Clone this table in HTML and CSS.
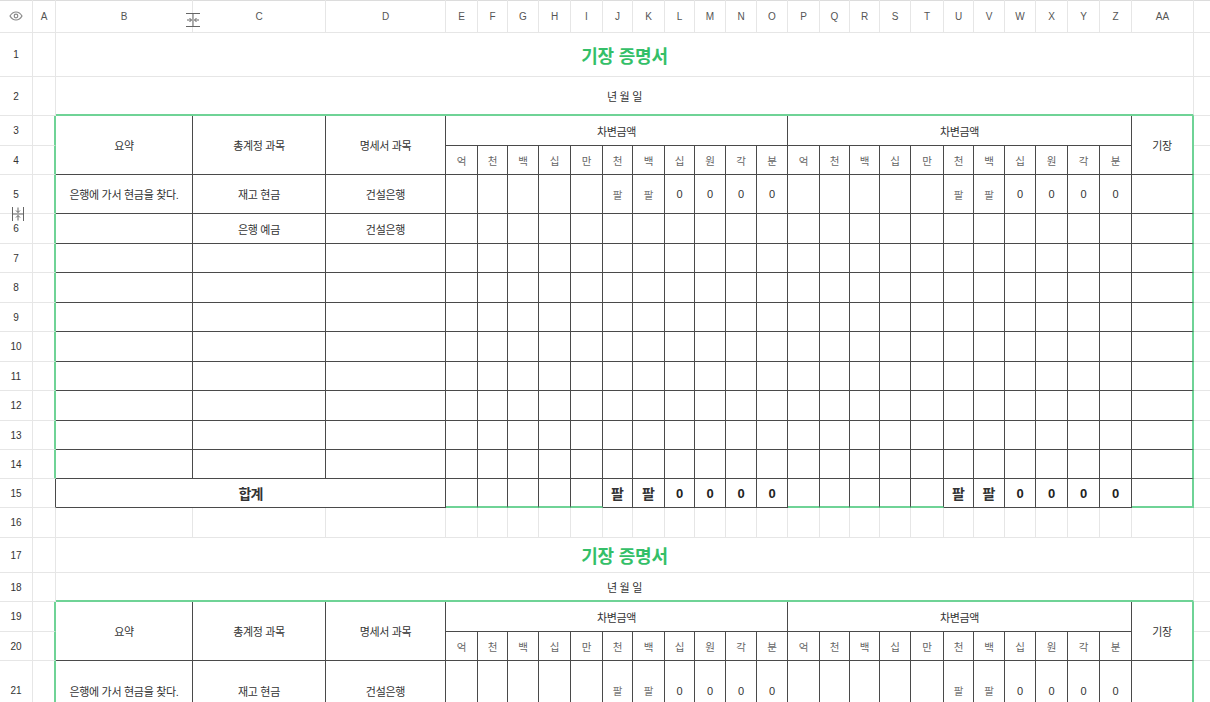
FILE: index.html
```html
<!DOCTYPE html>
<html lang="ko">
<head>
<meta charset="utf-8">
<title>기장 증명서</title>
<link rel="stylesheet" href="styles.css">
</head>
<body>
<div class="wrap">
<div class="sheet">
<!-- header -->
<div class="hd"><svg width="14" height="10" viewBox="0 0 14 10"><path d="M1 5C3 1.6 5 1 7 1S11 1.6 13 5C11 8.4 9 9 7 9S3 8.4 1 5Z" fill="none" stroke="#8a8a8a" stroke-width="1.2"/><circle cx="7" cy="5" r="1.8" fill="none" stroke="#8a8a8a" stroke-width="1.2"/></svg></div>
<div class="hd">A</div><div class="hd">B</div><div class="hd">C</div><div class="hd">D</div><div class="hd">E</div><div class="hd">F</div><div class="hd">G</div><div class="hd">H</div><div class="hd">I</div><div class="hd">J</div><div class="hd">K</div><div class="hd">L</div><div class="hd">M</div><div class="hd">N</div><div class="hd">O</div><div class="hd">P</div><div class="hd">Q</div><div class="hd">R</div><div class="hd">S</div><div class="hd">T</div><div class="hd">U</div><div class="hd">V</div><div class="hd">W</div><div class="hd">X</div><div class="hd">Y</div><div class="hd">Z</div><div class="hd">AA</div><div class="hd"></div>
<!-- row 1 -->
<div class="rn">1</div><div></div><div class="s26 title">기장 증명서</div><div></div>
<!-- row 2 -->
<div class="rn">2</div><div></div><div class="s26 date gb">년 월 일</div><div></div>
<!-- row 3 -->
<div class="rn">3</div><div class="gr"></div>
<div class="t th r2">요약</div><div class="t th r2">총계정 과목</div><div class="t th r2">명세서 과목</div>
<div class="t th s11">차변금액</div><div class="t th s11">차변금액</div>
<div class="t th r2 gr">기장</div><div></div>
<!-- row 4 -->
<div class="rn">4</div><div class="gr"></div>
<div class="t sub">억</div><div class="t sub">천</div><div class="t sub">백</div><div class="t sub">십</div><div class="t sub">만</div><div class="t sub">천</div><div class="t sub">백</div><div class="t sub">십</div><div class="t sub">원</div><div class="t sub">각</div><div class="t sub">분</div>
<div class="t sub">억</div><div class="t sub">천</div><div class="t sub">백</div><div class="t sub">십</div><div class="t sub">만</div><div class="t sub">천</div><div class="t sub">백</div><div class="t sub">십</div><div class="t sub">원</div><div class="t sub">각</div><div class="t sub">분</div>
<div></div>
<!-- row 5 -->
<div class="rn">5</div><div class="gr"></div>
<div class="t tx">은행에 가서 현금을 찾다.</div><div class="t tx">재고 현금</div><div class="t tx">건설은행</div>
<div class="t"></div><div class="t"></div><div class="t"></div><div class="t"></div><div class="t"></div>
<div class="t p">팔</div><div class="t p">팔</div><div class="t z">0</div><div class="t z">0</div><div class="t z">0</div><div class="t z">0</div>
<div class="t"></div><div class="t"></div><div class="t"></div><div class="t"></div><div class="t"></div>
<div class="t p">팔</div><div class="t p">팔</div><div class="t z">0</div><div class="t z">0</div><div class="t z">0</div><div class="t z">0</div>
<div class="t gr"></div><div></div>
<!-- row 6 -->
<div class="rn">6</div><div class="gr"></div>
<div class="t"></div><div class="t tx">은행 예금</div><div class="t tx">건설은행</div>
<div class="t"></div><div class="t"></div><div class="t"></div><div class="t"></div><div class="t"></div><div class="t"></div><div class="t"></div><div class="t"></div><div class="t"></div><div class="t"></div><div class="t"></div>
<div class="t"></div><div class="t"></div><div class="t"></div><div class="t"></div><div class="t"></div><div class="t"></div><div class="t"></div><div class="t"></div><div class="t"></div><div class="t"></div><div class="t"></div>
<div class="t gr"></div><div></div>
<!-- row 7 -->
<div class="rn">7</div><div class="gr"></div>
<div class="t"></div><div class="t"></div><div class="t"></div>
<div class="t"></div><div class="t"></div><div class="t"></div><div class="t"></div><div class="t"></div><div class="t"></div><div class="t"></div><div class="t"></div><div class="t"></div><div class="t"></div><div class="t"></div>
<div class="t"></div><div class="t"></div><div class="t"></div><div class="t"></div><div class="t"></div><div class="t"></div><div class="t"></div><div class="t"></div><div class="t"></div><div class="t"></div><div class="t"></div>
<div class="t gr"></div><div></div>
<!-- row 8 -->
<div class="rn">8</div><div class="gr"></div>
<div class="t"></div><div class="t"></div><div class="t"></div>
<div class="t"></div><div class="t"></div><div class="t"></div><div class="t"></div><div class="t"></div><div class="t"></div><div class="t"></div><div class="t"></div><div class="t"></div><div class="t"></div><div class="t"></div>
<div class="t"></div><div class="t"></div><div class="t"></div><div class="t"></div><div class="t"></div><div class="t"></div><div class="t"></div><div class="t"></div><div class="t"></div><div class="t"></div><div class="t"></div>
<div class="t gr"></div><div></div>
<!-- row 9 -->
<div class="rn">9</div><div class="gr"></div>
<div class="t"></div><div class="t"></div><div class="t"></div>
<div class="t"></div><div class="t"></div><div class="t"></div><div class="t"></div><div class="t"></div><div class="t"></div><div class="t"></div><div class="t"></div><div class="t"></div><div class="t"></div><div class="t"></div>
<div class="t"></div><div class="t"></div><div class="t"></div><div class="t"></div><div class="t"></div><div class="t"></div><div class="t"></div><div class="t"></div><div class="t"></div><div class="t"></div><div class="t"></div>
<div class="t gr"></div><div></div>
<!-- row 10 -->
<div class="rn">10</div><div class="gr"></div>
<div class="t"></div><div class="t"></div><div class="t"></div>
<div class="t"></div><div class="t"></div><div class="t"></div><div class="t"></div><div class="t"></div><div class="t"></div><div class="t"></div><div class="t"></div><div class="t"></div><div class="t"></div><div class="t"></div>
<div class="t"></div><div class="t"></div><div class="t"></div><div class="t"></div><div class="t"></div><div class="t"></div><div class="t"></div><div class="t"></div><div class="t"></div><div class="t"></div><div class="t"></div>
<div class="t gr"></div><div></div>
<!-- row 11 -->
<div class="rn">11</div><div class="gr"></div>
<div class="t"></div><div class="t"></div><div class="t"></div>
<div class="t"></div><div class="t"></div><div class="t"></div><div class="t"></div><div class="t"></div><div class="t"></div><div class="t"></div><div class="t"></div><div class="t"></div><div class="t"></div><div class="t"></div>
<div class="t"></div><div class="t"></div><div class="t"></div><div class="t"></div><div class="t"></div><div class="t"></div><div class="t"></div><div class="t"></div><div class="t"></div><div class="t"></div><div class="t"></div>
<div class="t gr"></div><div></div>
<!-- row 12 -->
<div class="rn">12</div><div class="gr"></div>
<div class="t"></div><div class="t"></div><div class="t"></div>
<div class="t"></div><div class="t"></div><div class="t"></div><div class="t"></div><div class="t"></div><div class="t"></div><div class="t"></div><div class="t"></div><div class="t"></div><div class="t"></div><div class="t"></div>
<div class="t"></div><div class="t"></div><div class="t"></div><div class="t"></div><div class="t"></div><div class="t"></div><div class="t"></div><div class="t"></div><div class="t"></div><div class="t"></div><div class="t"></div>
<div class="t gr"></div><div></div>
<!-- row 13 -->
<div class="rn">13</div><div class="gr"></div>
<div class="t"></div><div class="t"></div><div class="t"></div>
<div class="t"></div><div class="t"></div><div class="t"></div><div class="t"></div><div class="t"></div><div class="t"></div><div class="t"></div><div class="t"></div><div class="t"></div><div class="t"></div><div class="t"></div>
<div class="t"></div><div class="t"></div><div class="t"></div><div class="t"></div><div class="t"></div><div class="t"></div><div class="t"></div><div class="t"></div><div class="t"></div><div class="t"></div><div class="t"></div>
<div class="t gr"></div><div></div>
<!-- row 14 -->
<div class="rn">14</div><div class="gr"></div>
<div class="t"></div><div class="t"></div><div class="t"></div>
<div class="t"></div><div class="t"></div><div class="t"></div><div class="t"></div><div class="t"></div><div class="t"></div><div class="t"></div><div class="t"></div><div class="t"></div><div class="t"></div><div class="t"></div>
<div class="t"></div><div class="t"></div><div class="t"></div><div class="t"></div><div class="t"></div><div class="t"></div><div class="t"></div><div class="t"></div><div class="t"></div><div class="t"></div><div class="t"></div>
<div class="t gr"></div><div></div>
<!-- row 15 -->
<div class="rn">15</div><div class="dr"></div>
<div class="t s3 sum">합계</div>
<div class="t gb"></div><div class="t gb"></div><div class="t gb"></div><div class="t gb"></div><div class="t gb"></div>
<div class="t ps">팔</div><div class="t ps">팔</div><div class="t zs">0</div><div class="t zs">0</div><div class="t zs">0</div><div class="t zs">0</div>
<div class="t gb"></div><div class="t gb"></div><div class="t gb"></div><div class="t gb"></div><div class="t gb"></div>
<div class="t ps">팔</div><div class="t ps">팔</div><div class="t zs">0</div><div class="t zs">0</div><div class="t zs">0</div><div class="t zs">0</div>
<div class="t gr gb"></div><div></div>
<!-- row 16 -->
<div class="rn">16</div><div></div>
<div></div><div></div><div></div><div></div><div></div><div></div><div></div><div></div><div></div><div></div><div></div><div></div><div></div>
<div></div><div></div><div></div><div></div><div></div><div></div><div></div><div></div><div></div><div></div><div></div><div></div><div></div>
<div></div>
<!-- row 17 -->
<div class="rn">17</div><div></div><div class="s26 title">기장 증명서</div><div></div>
<!-- row 18 -->
<div class="rn">18</div><div></div><div class="s26 date gb">년 월 일</div><div></div>
<!-- row 19 -->
<div class="rn">19</div><div class="gr"></div>
<div class="t th r2">요약</div><div class="t th r2">총계정 과목</div><div class="t th r2">명세서 과목</div>
<div class="t th s11">차변금액</div><div class="t th s11">차변금액</div>
<div class="t th r2 gr">기장</div><div></div>
<!-- row 20 -->
<div class="rn">20</div><div class="gr"></div>
<div class="t sub">억</div><div class="t sub">천</div><div class="t sub">백</div><div class="t sub">십</div><div class="t sub">만</div><div class="t sub">천</div><div class="t sub">백</div><div class="t sub">십</div><div class="t sub">원</div><div class="t sub">각</div><div class="t sub">분</div>
<div class="t sub">억</div><div class="t sub">천</div><div class="t sub">백</div><div class="t sub">십</div><div class="t sub">만</div><div class="t sub">천</div><div class="t sub">백</div><div class="t sub">십</div><div class="t sub">원</div><div class="t sub">각</div><div class="t sub">분</div>
<div></div>
<!-- row 21 -->
<div class="rn">21</div><div class="gr"></div>
<div class="t tx">은행에 가서 현금을 찾다.</div><div class="t tx">재고 현금</div><div class="t tx">건설은행</div>
<div class="t"></div><div class="t"></div><div class="t"></div><div class="t"></div><div class="t"></div>
<div class="t p">팔</div><div class="t p">팔</div><div class="t z">0</div><div class="t z">0</div><div class="t z">0</div><div class="t z">0</div>
<div class="t"></div><div class="t"></div><div class="t"></div><div class="t"></div><div class="t"></div>
<div class="t p">팔</div><div class="t p">팔</div><div class="t z">0</div><div class="t z">0</div><div class="t z">0</div><div class="t z">0</div>
<div class="t gr"></div><div></div>
</div>
<svg class="cur-col" width="16" height="16" viewBox="0 0 16 16"><path d="M1 1.5H15M1 14.5H15M8 1.5V14.5" stroke="#666" stroke-width="1" fill="none"/><path d="M2 8H6.5M4.5 6L6.5 8L4.5 10M14 8H9.5M11.5 6L9.5 8L11.5 10" stroke="#666" stroke-width="1" fill="none"/></svg>
<svg class="cur-row" width="14" height="16" viewBox="0 0 14 16"><path d="M1.5 1V15M12.5 1V15M1.5 8H12.5" stroke="#666" stroke-width="1" fill="none"/><path d="M7 1.5V6.5M5 4.5L7 6.5L9 4.5M7 14.5V9.5M5 11.5L7 9.5L9 11.5" stroke="#666" stroke-width="1" fill="none"/></svg>
</div>
</body>
</html>
```

FILE: styles.css
```css
* { box-sizing: border-box; }
html, body { margin: 0; padding: 0; background: #fff; }
body {
  width: 1210px;
  height: 702px;
  overflow: hidden;
  font-family: "Liberation Sans", "Noto Sans CJK KR", sans-serif;
  color: #333;
}
.wrap { position: relative; width: 1210px; height: 702px; overflow: hidden; }
.sheet {
  display: grid;
  grid-template-columns: 33px 23px 137px 133px 120px 32px 30px 31px 32px 32px 30px 32px 30px 31px 31px 31px 32px 30px 30px 31px 33px 30px 31px 31px 32px 32px 32px 62px 100px;
  grid-template-rows: 33px 44px 39px 30px 29px 39px 30px 29px 30px 29px 30px 29px 30px 29px 29px 29px 30px 35px 29px 30px 29px 60px;
}
.sheet > div {
  border-right: 1px solid #e6e6e6;
  border-bottom: 1px solid #e6e6e6;
  display: flex;
  align-items: center;
  justify-content: center;
  font-size: 11px;
  color: #333;
  white-space: nowrap;
  overflow: hidden;
  min-width: 0;
}
.sheet > div.hd { font-size: 10px; color: #555; box-shadow: inset 0 1px 0 #dcdcdc; }
.sheet > div.rn { font-size: 10px; color: #333; }
.sheet > div.t { border-right-color: #4a4a4a; border-bottom-color: #4a4a4a; }
.sheet > div.gr { border-right: 2px solid #6fd396; }
.sheet > div.gb { border-bottom: 2px solid #6fd396; }
.sheet > div.dr { border-right-color: #4a4a4a; }
.s26 { grid-column: span 26; }
.s11 { grid-column: span 11; }
.s3 { grid-column: span 3; }
.r2 { grid-row: span 2; }
.sheet > div.title { font-size: 18px; font-weight: 700; color: #34bf68; letter-spacing: -0.2px; }
.sheet > div.date { font-size: 11px; letter-spacing: -0.3px; color: #333; }
.sheet > div.th { font-size: 11px; letter-spacing: -0.4px; color: #333; }
.sheet > div.sub { font-size: 10.5px; color: #666; }
.sheet > div.tx { font-size: 11px; letter-spacing: -0.3px; color: #333; }
.sheet > div.p { font-size: 10.5px; color: #777; }
.sheet > div.z { font-size: 11px; color: #333; }
.sheet > div.sum { font-size: 14px; font-weight: 700; letter-spacing: -1px; color: #333; }
.sheet > div.ps { font-size: 14px; font-weight: 700; color: #333; }
.sheet > div.zs { font-size: 13px; font-weight: 700; color: #222; }
.cur-col { position: absolute; left: 185px; top: 12px; }
.cur-row { position: absolute; left: 11px; top: 206px; }
```
